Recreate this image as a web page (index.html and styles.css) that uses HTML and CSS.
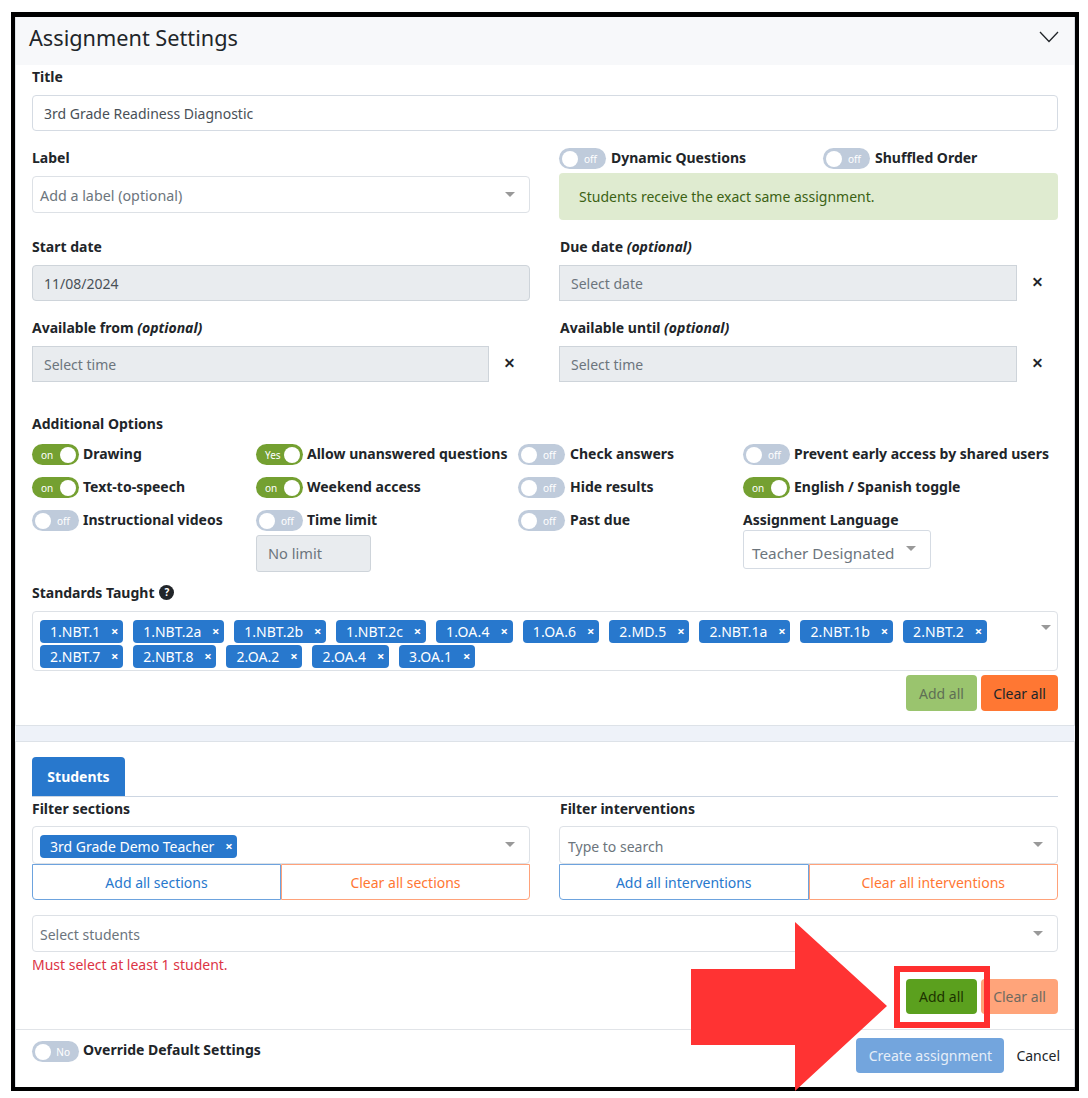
FILE: index.html
```html
<!DOCTYPE html>
<html lang="en">
<head>
<meta charset="utf-8">
<title>Assignment Settings</title>
<link rel="stylesheet" href="styles.css">
</head>
<body>
<div class="frame">
  <section class="card settings">
    <header class="card-head">
      <h1>Assignment Settings</h1>
      <svg class="chevron" width="20" height="12" viewBox="0 0 20 12"><path d="M1 1l9 9.5L19 1" fill="none" stroke="#212529" stroke-width="1.3"/></svg>
    </header>
    <div class="card-body">
      <label class="field-label title-label">Title</label>
      <div class="input mt8">3rd Grade Readiness Diagnostic</div>

      <div class="two-col mt16">
        <div>
          <label class="field-label">Label</label>
          <div class="select mt8 h37"><span class="ph large-ph">Add a label (optional)</span><i class="caret"></i></div>
        </div>
        <div>
          <div class="toggle-pair">
            <div class="opt"><span class="toggle off"><span class="knob"></span><span class="tt">off</span></span><b>Dynamic Questions</b></div>
            <div class="opt"><span class="toggle off"><span class="knob"></span><span class="tt">off</span></span><b>Shuffled Order</b></div>
          </div>
          <div class="alert">Students receive the exact same assignment.</div>
        </div>
      </div>

      <div class="two-col mt16">
        <div>
          <label class="field-label">Start date</label>
          <div class="input disabled mt8">11/08/2024</div>
        </div>
        <div>
          <label class="field-label">Due date <em>(optional)</em></label>
          <div class="clearable mt8"><div class="input disabled square ph">Select date</div><span class="clear-x">×</span></div>
        </div>
      </div>

      <div class="two-col mt16">
        <div>
          <label class="field-label">Available from <em>(optional)</em></label>
          <div class="clearable mt8"><div class="input disabled square ph">Select time</div><span class="clear-x">×</span></div>
        </div>
        <div>
          <label class="field-label">Available until <em>(optional)</em></label>
          <div class="clearable mt8"><div class="input disabled square ph">Select time</div><span class="clear-x">×</span></div>
        </div>
      </div>

      <label class="field-label options-title">Additional Options</label>
      <div class="options">
        <div class="opt-col">
          <div class="opt"><span class="toggle on"><span class="tt">on</span><span class="knob"></span></span><b>Drawing</b></div>
          <div class="opt"><span class="toggle on"><span class="tt">on</span><span class="knob"></span></span><b>Text-to-speech</b></div>
          <div class="opt"><span class="toggle off"><span class="knob"></span><span class="tt">off</span></span><b>Instructional videos</b></div>
        </div>
        <div class="opt-col">
          <div class="opt"><span class="toggle on"><span class="tt">Yes</span><span class="knob"></span></span><b>Allow unanswered questions</b></div>
          <div class="opt"><span class="toggle on"><span class="tt">on</span><span class="knob"></span></span><b>Weekend access</b></div>
          <div class="opt"><span class="toggle off"><span class="knob"></span><span class="tt">off</span></span><b>Time limit</b></div>
          <div class="limit">No limit</div>
        </div>
        <div class="opt-col wide-gap">
          <div class="opt"><span class="toggle off"><span class="knob"></span><span class="tt">off</span></span><b>Check answers</b></div>
          <div class="opt"><span class="toggle off"><span class="knob"></span><span class="tt">off</span></span><b>Hide results</b></div>
          <div class="opt"><span class="toggle off"><span class="knob"></span><span class="tt">off</span></span><b>Past due</b></div>
        </div>
        <div class="opt-col">
          <div class="opt"><span class="toggle off"><span class="knob"></span><span class="tt">off</span></span><b>Prevent early access by shared users</b></div>
          <div class="opt"><span class="toggle on"><span class="tt">on</span><span class="knob"></span></span><b>English / Spanish toggle</b></div>
          <div class="lang">
            <b>Assignment Language</b>
            <div class="lang-select">Teacher Designated<i class="caret"></i></div>
          </div>
        </div>
      </div>

      <label class="field-label standards-title">Standards Taught <span class="help">?</span></label>
      <div class="multi mt8">
        <div class="tags">
          <span class="tag">1.NBT.1<s>×</s></span><span class="tag">1.NBT.2a<s>×</s></span><span class="tag">1.NBT.2b<s>×</s></span><span class="tag">1.NBT.2c<s>×</s></span><span class="tag wider">1.OA.4<s>×</s></span><span class="tag wider">1.OA.6<s>×</s></span><span class="tag wider">2.MD.5<s>×</s></span><span class="tag">2.NBT.1a<s>×</s></span><span class="tag wide">2.NBT.1b<s>×</s></span><span class="tag wide">2.NBT.2<s>×</s></span><span class="tag">2.NBT.7<s>×</s></span><span class="tag">2.NBT.8<s>×</s></span><span class="tag wide">2.OA.2<s>×</s></span><span class="tag wider">2.OA.4<s>×</s></span><span class="tag wide">3.OA.1<s>×</s></span>
        </div>
        <i class="caret"></i>
      </div>
      <div class="btn-row">
        <span class="btn add-off">Add all</span>
        <span class="btn clear-on">Clear all</span>
      </div>
    </div>
  </section>

  <section class="card students">
    <div class="tabs"><span class="tab">Students</span></div>
    <div class="two-col filters">
      <div>
        <label class="field-label">Filter sections</label>
        <div class="select mt7 h38"><span class="tag">3rd Grade Demo Teacher<s>×</s></span><i class="caret"></i></div>
        <div class="split">
          <span class="split-btn blue">Add all sections</span>
          <span class="split-btn orange">Clear all sections</span>
        </div>
      </div>
      <div>
        <label class="field-label">Filter interventions</label>
        <div class="select mt7 h38"><span class="ph">Type to search</span><i class="caret"></i></div>
        <div class="split">
          <span class="split-btn blue">Add all interventions</span>
          <span class="split-btn orange">Clear all interventions</span>
        </div>
      </div>
    </div>
    <div class="select students-select h37"><span class="ph">Select students</span><i class="caret"></i></div>
    <div class="error">Must select at least 1 student.</div>
    <div class="btn-row students-btns">
      <span class="btn add-on">Add all</span>
      <span class="btn clear-off">Clear all</span>
    </div>
    <footer class="foot">
      <div class="opt"><span class="toggle off"><span class="knob"></span><span class="tt">No</span></span><b>Override Default Settings</b></div>
      <div class="foot-actions">
        <span class="btn create">Create assignment</span>
        <span class="cancel">Cancel</span>
      </div>
    </footer>
  </section>
</div>
<svg class="arrow" width="197" height="170" viewBox="0 0 197 170"><polygon points="0,47 104,47 104,0 196,84 104,169 104,123 0,123" fill="#ff3333"/></svg>
<div class="highlight"></div>
</body>
</html>
```

FILE: styles.css
```css
* { box-sizing: border-box; }
html, body { margin: 0; padding: 0; background: #fff; }
body {
  position: relative;
  width: 1088px;
  height: 1098px;
  overflow: hidden;
  padding: 12px 9px 7px 11px;
  font-family: "Noto Sans", "Open Sans", sans-serif;
  font-size: 14px;
  line-height: 21px;
  color: #212529;
}
.frame {
  width: 1068px;
  height: 1079px;
  border: 4px solid #000;
  border-top-width: 5px;
  background: #eef2f9;
  display: flex;
  flex-direction: column;
  gap: 15px;
}
.card { background: #fff; border-left: 1px solid #dfe3e8; border-right: 1px solid #d8dde3; border-bottom: 1px solid #dde2e8; }
.settings { height: 709px; }
.students { flex: 1; border-top: 1px solid #dde2e8; border-bottom: 0; padding: 15px 16px 0 16px; }
.card-head {
  height: 48px;
  background: #f7f8fa;
  display: flex;
  align-items: center;
  justify-content: space-between;
  padding: 0 15px 6px 13px;
}
h1 { margin: 0; font-size: 21.7px; font-weight: 400; line-height: 40px; }
.chevron { margin-top: -3px; }
.card-body { padding: 1px 16px 0 16px; }
.field-label { display: block; font-weight: 700; height: 21px; }
.field-label em { font-style: italic; font-weight: 700; }
.mt7 { margin-top: 7px; }
.mt8 { margin-top: 8px; }
.mt16 { margin-top: 16px; }
.two-col { display: grid; grid-template-columns: 498px 499px; column-gap: 29px; }
.two-col > div:last-child > .field-label { padding-left: 1px; }
.two-col > div:last-child > .select { padding-left: 8px; }
.filters { margin-top: 1px; }
.input {
  height: 36px;
  border: 1px solid #d5dbe3;
  border-radius: 4px;
  padding: 0 11px;
  display: flex;
  align-items: center;
  color: #495057;
  background: #fff;
}
.disabled { background: #e9ecef; border-color: #ced4da; }
.square { border-radius: 0; flex: 1; }
.ph { color: #6c757d; }
.large-ph { font-size: 14.3px; }
.select {
  position: relative;
  border: 1px solid #dde1e6;
  border-radius: 4px;
  padding: 2px 7px 0;
  display: flex;
  align-items: center;
  background: #fff;
}
.h37 { height: 37px; }
.h38 { height: 38px; }
.caret {
  width: 0;
  height: 0;
  border-left: 5px solid transparent;
  border-right: 5px solid transparent;
  border-top: 5px solid #999;
  position: absolute;
  right: 14px;
  top: 15px;
}
.clearable { display: flex; align-items: center; }
.clear-x { width: 41px; text-align: center; font-size: 20px; font-weight: 600; color: #212529; line-height: 36px; margin-top: -3px; }
.toggle-pair { display: grid; grid-template-columns: 264px 1fr; margin-top: 1px; }
.opt { display: flex; align-items: center; height: 21px; gap: 4px; }
.toggle-pair .opt { gap: 5px; }
.wide-gap .opt { gap: 5px; }
.opt b, .lang b { font-weight: 700; white-space: nowrap; }
.opt b { margin-top: -3px; }
.toggle {
  flex: none;
  width: 47px;
  height: 21px;
  border-radius: 11px;
  display: flex;
  align-items: center;
  justify-content: space-between;
  padding: 0 3px;
  color: #fff;
  font-size: 10px;
}
.toggle.on { background: #74a031; padding-left: 9px; }
.toggle.off { background: #bfcbdb; padding-right: 9px; }
.knob { width: 16px; height: 16px; border-radius: 50%; background: #fff; }
.tt { line-height: 21px; margin-top: 1px; }
.alert {
  height: 47px;
  margin-top: 4px;
  background: #dfebd0;
  border-radius: 4px;
  padding: 0 20px;
  display: flex;
  align-items: center;
  color: #3c6214;
}
.options-title { margin-top: 31px; }
.options { display: grid; grid-template-columns: 224px 262px 225px 1fr; margin-top: 10px; }
.opt-col { display: flex; flex-direction: column; gap: 12px; }
.limit {
  width: 115px;
  height: 37px;
  margin-top: -8px;
  border: 1px solid #ced4da;
  border-radius: 3px;
  background: #e9ecef;
  color: #6c757d;
  padding: 0 11px;
  display: flex;
  align-items: center;
  font-size: 14.6px;
}
.lang { margin-top: -1px; display: flex; flex-direction: column; }
.lang-select {
  position: relative;
  width: 188px;
  height: 39px;
  border: 1px solid #d5dbe3;
  border-radius: 3px;
  padding: 8px 8px 0;
  display: flex;
  align-items: center;
  color: #6c757d;
  font-size: 15.3px;
}
.lang-select .caret { right: 14px; top: 15px; }
.standards-title { margin-top: 10px; display: flex; align-items: center; gap: 5px; }
.help {
  width: 15px;
  height: 15px;
  border-radius: 50%;
  background: #212529;
  color: #fff;
  font-size: 10px;
  line-height: 15px;
  text-align: center;
  font-weight: 700;
}
.multi {
  position: relative;
  height: 60px;
  border: 1px solid #dde1e6;
  border-radius: 4px;
  padding: 8px 7px 0;
}
.multi .caret { top: 13px; right: 6px; }
.tags { display: flex; flex-wrap: wrap; gap: 2px 10px; width: 960px; }
.tag {
  display: inline-flex;
  align-items: center;
  height: 23px;
  background: #2878cd;
  color: #fff;
  border-radius: 4px;
  padding: 0 4px 0 10px;
  white-space: nowrap;
}
.tag.wide { letter-spacing: 0.1px; }
.tag.wider { letter-spacing: 0.2px; }
.tag s { text-decoration: none; font-size: 13px; font-weight: 700; margin-left: 10px; width: 9px; text-align: center; letter-spacing: 0; }
.btn-row { display: flex; justify-content: flex-end; gap: 4px; margin-top: 4px; }
.btn {
  height: 36px;
  border-radius: 4px;
  display: inline-flex;
  align-items: center;
  justify-content: center;
  white-space: nowrap;
}
.add-off { width: 71px; background: #9ac46e; color: #5f6f55; }
.clear-on { width: 77px; background: #ff7733; color: #212529; }
.tabs { height: 40px; border-bottom: 1px solid #cdd6e2; }
.tab {
  display: flex;
  width: 93px;
  height: 39px;
  align-items: center;
  justify-content: center;
  background: #2878cd;
  color: #fff;
  font-weight: 700;
  border-radius: 4px 4px 0 0;
}
.split { display: grid; grid-template-columns: 1fr 1fr; height: 36px; }
.split-btn {
  display: flex;
  align-items: center;
  justify-content: center;
  border: 1px solid;
}
.blue { color: #2878cd; border-color: #6da3de; border-radius: 0 0 0 4px; }
.orange { color: #ff7733; border-color: #ffa27a; border-radius: 0 0 4px 0; }
.students-select { margin-top: 15px; }
.error { color: #dc3545; margin-top: 2px; height: 21px; }
.students-btns { margin-top: 4px; }
.students-btns .btn { height: 35px; }
.add-on { width: 71px; background: #5ba01e; color: #1d3300; }
.clear-off { width: 77px; background: #ffa47a; color: #6f6a60; }
.foot {
  margin: 15px -16px 0 -16px;
  border-top: 1px solid #e1e4e8;
  padding: 8px 14px 0 16px;
  display: flex;
  justify-content: space-between;
}
.foot .opt { margin-top: 3px; }
.foot .opt b { margin-top: -5px; }
.foot-actions { display: flex; gap: 12px; align-items: center; }
.create { width: 148px; height: 35px; background: #73a5dd; color: #e6eef8; }
.cancel { color: #212529; }
.arrow { position: absolute; left: 691px; top: 922px; }
.highlight {
  position: absolute;
  left: 894px;
  top: 966px;
  width: 96px;
  height: 62px;
  border: 6px solid #ff2f2f;
}
```
